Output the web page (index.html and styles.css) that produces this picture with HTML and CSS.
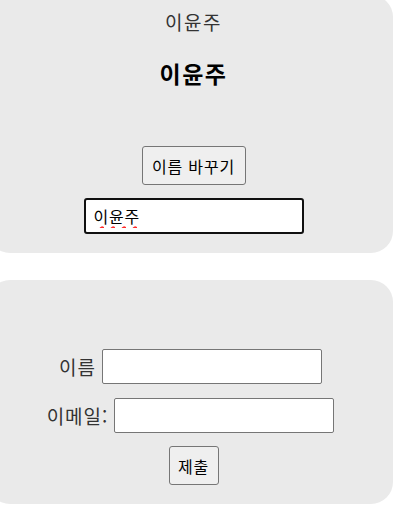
FILE: index.html
```html
<!DOCTYPE html>
<html lang="ko">
<head>
    <meta charset="UTF-8">
    <meta name="viewport" content="width=device-width, initial-scale=1.0">
    <title>이름 바꾸기</title>
    <link rel="stylesheet" href="styles.css">
</head>
<body>
    <div class="card card-name">
        <p class="current">이윤주</p>
        <h2 class="title">이윤주</h2>
        <button class="btn btn-change">이름 바꾸기</button>
        <input class="name-input" type="text" value="이윤주">
    </div>

    <form class="card card-form">
        <div class="row">
            <label for="name">이름</label>
            <input id="name" class="field" type="text">
        </div>
        <div class="row">
            <label for="email">이메일:</label>
            <input id="email" class="field" type="text">
        </div>
        <button class="btn btn-submit" type="button">제출</button>
    </form>
</body>
</html>
```

FILE: styles.css
```css
* {
    margin: 0;
    padding: 0;
    box-sizing: border-box;
}

body {
    font-family: "Noto Sans CJK KR", "Noto Sans", sans-serif;
    background: #fff;
    color: #222;
    overflow: hidden;
}

.card {
    width: 405px;
    margin-left: -12px;
    background: #eaeaea;
    border-radius: 22px;
    display: flex;
    flex-direction: column;
    align-items: center;
}

.card-name {
    margin-top: -5px;
    padding: 14px 0 19px;
}

.current {
    font-size: 19px;
    line-height: 26px;
    letter-spacing: 1.5px;
    color: #333;
    margin-left: 6px;
}

.title {
    margin-top: 22px;
    margin-left: 6px;
    font-size: 23px;
    line-height: 32px;
    letter-spacing: 1.5px;
    font-weight: bold;
    color: #000;
}

.btn {
    font-family: inherit;
    font-size: 16px;
    letter-spacing: 0.8px;
    color: #000;
    background: #efefef;
    border: 1px solid #767676;
    border-radius: 3px;
}

.btn-change {
    margin-top: 57px;
    margin-left: 6px;
    width: 104px;
    height: 39px;
}

.name-input {
    margin-top: 13px;
    margin-left: 6px;
    width: 220px;
    height: 36px;
    padding: 0 8px;
    font-family: inherit;
    font-size: 16px;
    letter-spacing: 0.8px;
    color: #000;
    border: 2px solid #101010;
    border-radius: 3px;
    outline: none;
    text-decoration: underline wavy #ff2a2a;
    text-decoration-thickness: 1.5px;
    text-underline-offset: 3px;
}

.card-form {
    margin-top: 27px;
    padding: 69px 0 19px;
}

.row {
    display: flex;
    align-items: center;
    gap: 6px;
    margin-bottom: 14px;
}

.row + .row {
    margin-bottom: 13px;
}

.row label {
    font-size: 19px;
    letter-spacing: 1px;
    color: #333;
}

.field {
    width: 220px;
    height: 35px;
    border: 1px solid #767676;
    border-radius: 2px;
    background: #fff;
}

.btn-submit {
    width: 50px;
    height: 39px;
    margin-left: 6px;
}
```
